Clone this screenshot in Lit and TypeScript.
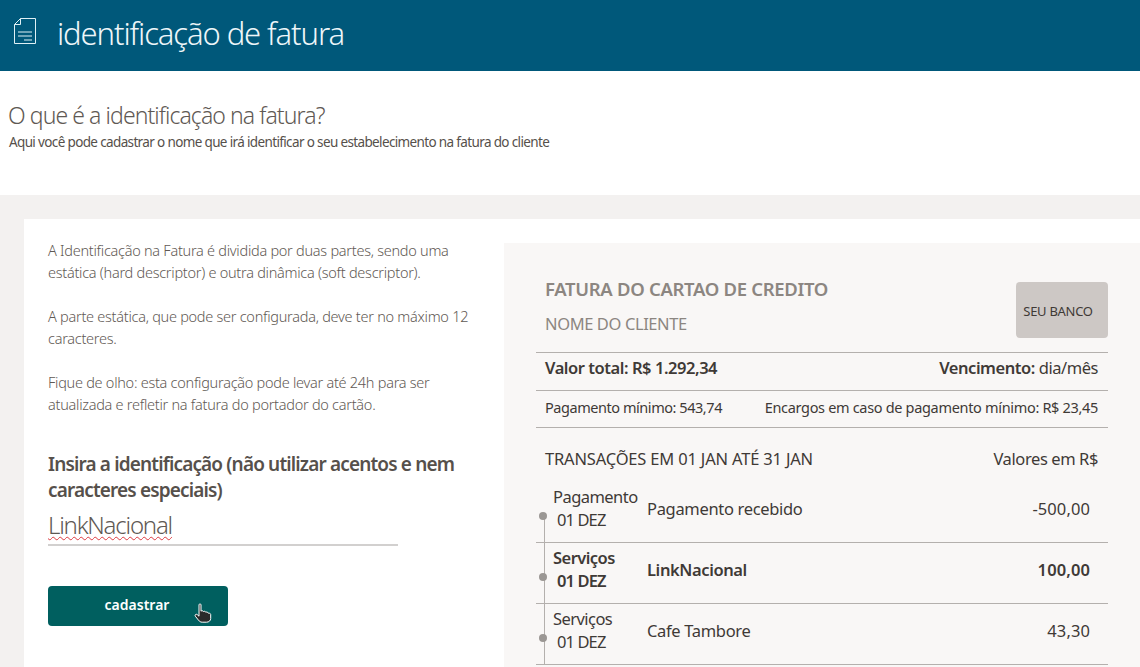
import { LitElement, html, css } from "lit";
import { customElement } from "lit/decorators.js";

const rows = [
  { cat: "Pagamento", date: "01 DEZ", desc: "Pagamento recebido", val: "-500,00", bold: false },
  { cat: "Serviços", date: "01 DEZ", desc: "LinkNacional", val: "100,00", bold: true },
  { cat: "Serviços", date: "01 DEZ", desc: "Cafe Tambore", val: "43,30", bold: false },
];

@customElement("app-root")
export class AppRoot extends LitElement {
  static styles = css`
    :host { display: block; height: 667px; overflow: hidden; position: relative; background: #fff;
      font-family: "Noto Sans", sans-serif; color: #56504b; }
    .top { height: 71px; background: #00587a; display: flex; align-items: center; padding-left: 14px; gap: 21px; }
    .top svg { display: block; margin-top: -9px; flex: none; }
    .top h1 { margin: -6px 0 0; font-size: 31px; font-weight: 300; color: #eef6f9; letter-spacing: -1.1px; line-height: 38px; }
    .intro { height: 124px; padding: 29px 0 0 8px; box-sizing: border-box; }
    .intro h2 { margin: 0; font-size: 23px; font-weight: 300; letter-spacing: -0.92px; line-height: 30px; color: #5f5954; }
    .intro p { margin: 2px 0 0 1px; font-size: 13.5px; letter-spacing: -0.64px; line-height: 21px; color: #56504b; }
    .band { background: #f3f1f0; padding: 24px 0 0 24px; height: 472px; box-sizing: border-box; }
    .card { background: #fff; height: 448px; display: flex; padding: 24px 0 0 24px; box-sizing: border-box; }
    .left { width: 456px; flex: none; margin-top: -4px; }
    .left p { margin: 0 0 22px; width: 425px; font-size: 14.5px; font-weight: 300; line-height: 22px; letter-spacing: -0.27px; color: #5f5954; }
    .left h3 { margin: 36px 0 0; font-size: 19px; font-weight: 600; line-height: 26px; letter-spacing: -0.85px; color: #56504b; width: 425px; }
    .field { width: 350px; height: 41px; box-sizing: border-box; border-bottom: 2px solid #d2d0cf; margin-top: 2px;
      font-size: 24px; font-weight: 300; letter-spacing: -1.2px; line-height: 32px; color: #5f5954; padding-top: 4px; }
    .field span { text-decoration: underline wavy #dc3a40 1.3px; text-underline-offset: 2px; text-decoration-skip-ink: none; }
    .btn { display: flex; align-items: center; justify-content: center; width: 180px; height: 40px; margin-top: 40px; background: #005f5f; border-radius: 4px;
      color: #fff; font-size: 14px; font-weight: 600; letter-spacing: 0; padding-right: 2px; padding-bottom: 4px; box-sizing: border-box; position: relative; }
    .hand { position: absolute; left: 146px; top: 17px; }
    .panel { width: 636px; flex: none; background: #f9f7f6; padding: 0 32px; box-sizing: border-box; color: #3f3a36; }
    .head { height: 110px; display: flex; justify-content: space-between; padding: 35px 0 0 9px; box-sizing: border-box; border-bottom: 1px solid #b4b0ad; position: relative; }
    .head b { display: block; font-size: 18.5px; font-weight: 600; letter-spacing: -0.32px; color: #8c8681; line-height: 22px; }
    .head i { display: block; font-style: normal; font-size: 16.5px; letter-spacing: -0.4px; color: #8c8681; line-height: 22px; margin-top: 13px; font-weight: 400; }
    .bank { position: absolute; right: 0; top: 39px; width: 92px; height: 56px; border-radius: 4px; background: #cdc8c5;
      display: flex; align-items: center; justify-content: center; font-size: 13px; letter-spacing: -0.3px; color: #3f3a36; padding: 2px 8px 0 0; box-sizing: border-box; white-space: nowrap; }
    .sum { height: 38px; display: flex; justify-content: space-between; align-items: center; padding: 0 10px 8px 9px; border-bottom: 1px solid #b4b0ad; box-sizing: border-box; font-size: 16.5px; letter-spacing: -0.45px; }
    .sum b { font-weight: 600; }
    .min { height: 37px; display: flex; justify-content: space-between; align-items: center; padding: 0 10px 4px 9px; border-bottom: 1px solid #b4b0ad; box-sizing: border-box; font-size: 14.5px; letter-spacing: -0.45px; }
    .min span + span { letter-spacing: -0.32px; }
    .tr-head { height: 54px; display: flex; justify-content: space-between; align-items: center; padding: 6px 10px 0 9px; box-sizing: border-box; font-size: 16.5px; letter-spacing: -0.18px; }
    .tr-head span + span { letter-spacing: -0.4px; }
    .row { height: 61px; display: grid; grid-template-columns: 94px 1fr auto; align-items: center; padding: 0 18px 8px 17px; border-bottom: 1px solid #b4b0ad; box-sizing: border-box; font-size: 16.5px; letter-spacing: -0.33px; position: relative; }
    .row::before { content: ""; position: absolute; left: 8px; top: 0; bottom: -1px; width: 1px; background: #b4b0ad; }
    .row:first-child::before { top: 34px; }
    .row.bold { font-weight: 600; letter-spacing: -0.4px; }
    .d { line-height: 23px; letter-spacing: -0.55px; }
    .d span { display: block; margin-left: 4px; letter-spacing: -0.9px; }
    .v { letter-spacing: 0.1px; }
    .dot { position: absolute; left: 3px; top: 30px; width: 8px; height: 8px; border-radius: 50%; background: #9b9794; }
  `;

  render() {
    return html`
      <div class="top">
        <svg width="22" height="26" viewBox="0 0 22 26" fill="none" stroke="#dff0f5" stroke-width="1">
          <path d="M6.5 .5H21.5V25.5H.5V6.5Z" />
          <path d="M6.5 .5V6.5H.5" />
          <path d="M4 14H18M4 18H18M10 22H18" />
        </svg>
        <h1>identificação de fatura</h1>
      </div>
      <div class="intro">
        <h2>O que é a identificação na fatura?</h2>
        <p>Aqui você pode cadastrar o nome que irá identificar o seu estabelecimento na fatura do cliente</p>
      </div>
      <div class="band">
        <div class="card">
          <div class="left">
            <p>A Identificação na Fatura é dividida por duas partes, sendo uma estática (hard descriptor) e outra dinâmica (soft descriptor).</p>
            <p>A parte estática, que pode ser configurada, deve ter no máximo 12 caracteres.</p>
            <p>Fique de olho: esta configuração pode levar até 24h para ser atualizada e refletir na fatura do portador do cartão.</p>
            <h3>Insira a identificação (não utilizar acentos e nem caracteres especiais)</h3>
            <div class="field"><span>LinkNacional</span></div>
            <div class="btn">cadastrar
              <svg class="hand" width="18" height="20" viewBox="0 0 18 20">
                <path d="M5 1.8C5 .6 7 .6 7 1.8V8.2C7.6 7.4 9.2 7.6 9.4 8.6C10 8 11.5 8.2 11.7 9.2C12.4 8.8 14 9 14.2 10.2C14.7 10 16.7 10.2 16.7 11.5V15.5C16.7 17.5 15 19.2 12.5 19.2H8.2C6.5 19.2 5.5 18.4 4.5 17.2L1.3 13.2C.5 12 2 10.6 3.2 11.6L5 13.2Z" fill="#2a2a2a" stroke="#fff" stroke-width="1" stroke-linejoin="round" />
              </svg>
            </div>
          </div>
          <div class="panel">
            <div class="head">
              <div><b>FATURA DO CARTAO DE CREDITO</b><i>NOME DO CLIENTE</i></div>
              <div class="bank">SEU BANCO</div>
            </div>
            <div class="sum"><span><b>Valor total: R$ 1.292,34</b></span><span><b>Vencimento:</b> dia/mês</span></div>
            <div class="min"><span>Pagamento mínimo: 543,74</span><span>Encargos em caso de pagamento mínimo: R$ 23,45</span></div>
            <div class="tr-head"><span>TRANSAÇÕES EM 01 JAN ATÉ 31 JAN</span><span>Valores em R$</span></div>
            <div>
              ${rows.map(r => html`
                <div class="row ${r.bold ? "bold" : ""}">
                  <i class="dot"></i>
                  <div class="d">${r.cat}<span>${r.date}</span></div>
                  <div>${r.desc}</div>
                  <div class="v">${r.val}</div>
                </div>`)}
            </div>
          </div>
        </div>
      </div>
    `;
  }
}
